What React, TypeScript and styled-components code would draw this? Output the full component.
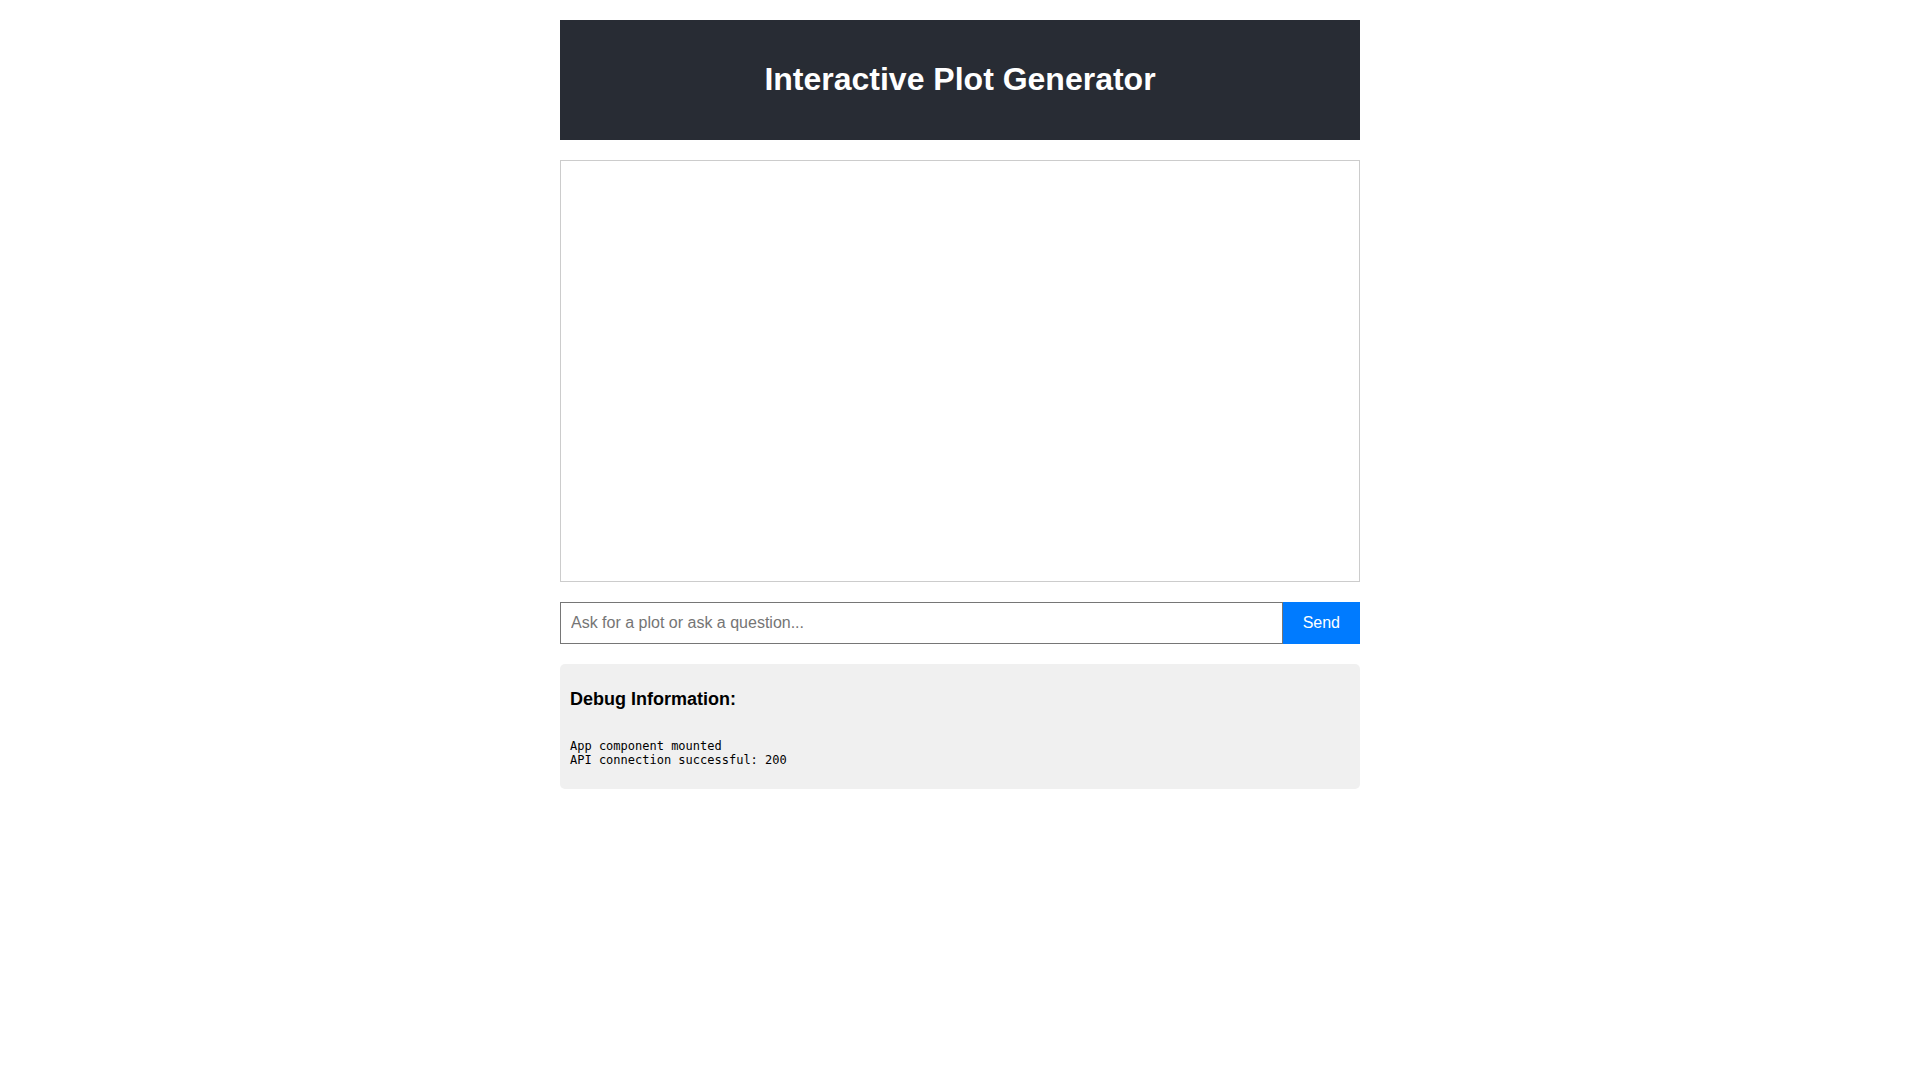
import React from "react";
import styled, { createGlobalStyle } from "styled-components";

const GlobalStyle = createGlobalStyle`
  body {
    margin: 0;
    font-family: "Liberation Sans", Arial, sans-serif;
    background: #ffffff;
  }
`;

const Container = styled.div`
  max-width: 800px;
  margin: 0 auto;
  padding: 20px;
`;

const Header = styled.header`
  background-color: #282c34;
  padding: 20px;
  color: #ffffff;
  text-align: center;
`;

const Title = styled.h1`
  margin: 0.67em 0;
  font-size: 32px;
  font-weight: bold;
`;

const PlotArea = styled.div`
  margin-top: 20px;
  height: 400px;
  padding: 10px;
  border: 1px solid #ccc;
`;

const InputRow = styled.form`
  display: flex;
  margin-top: 20px;
`;

const TextInput = styled.input`
  flex-grow: 1;
  padding: 11px 10px;
  font-size: 16px;
  font-family: "Liberation Sans", Arial, sans-serif;
  border: 1px solid #767676;
  outline: none;
  &::placeholder {
    color: #757575;
  }
`;

const SendButton = styled.button`
  padding: 10px 20px;
  font-size: 16px;
  font-family: "Liberation Sans", Arial, sans-serif;
  background-color: #007bff;
  color: #ffffff;
  border: none;
  cursor: pointer;
`;

const DebugBox = styled.div`
  margin-top: 20px;
  padding: 10px;
  background-color: #f0f0f0;
  border-radius: 5px;
`;

const DebugTitle = styled.h3`
  font-size: 18px;
  margin: 15px 0 29px;
`;

const DebugLog = styled.pre`
  font-family: "DejaVu Sans Mono", monospace;
  font-size: 12px;
  margin: 0 0 12px;
`;

export default function App() {
  return (
    <>
      <GlobalStyle />
      <Container>
        <Header>
          <Title>Interactive Plot Generator</Title>
        </Header>
        <PlotArea />
        <InputRow onSubmit={(e) => e.preventDefault()}>
          <TextInput type="text" placeholder="Ask for a plot or ask a question..." />
          <SendButton type="submit">Send</SendButton>
        </InputRow>
        <DebugBox>
          <DebugTitle>Debug Information:</DebugTitle>
          <DebugLog>{"App component mounted\nAPI connection successful: 200"}</DebugLog>
        </DebugBox>
      </Container>
    </>
  );
}
